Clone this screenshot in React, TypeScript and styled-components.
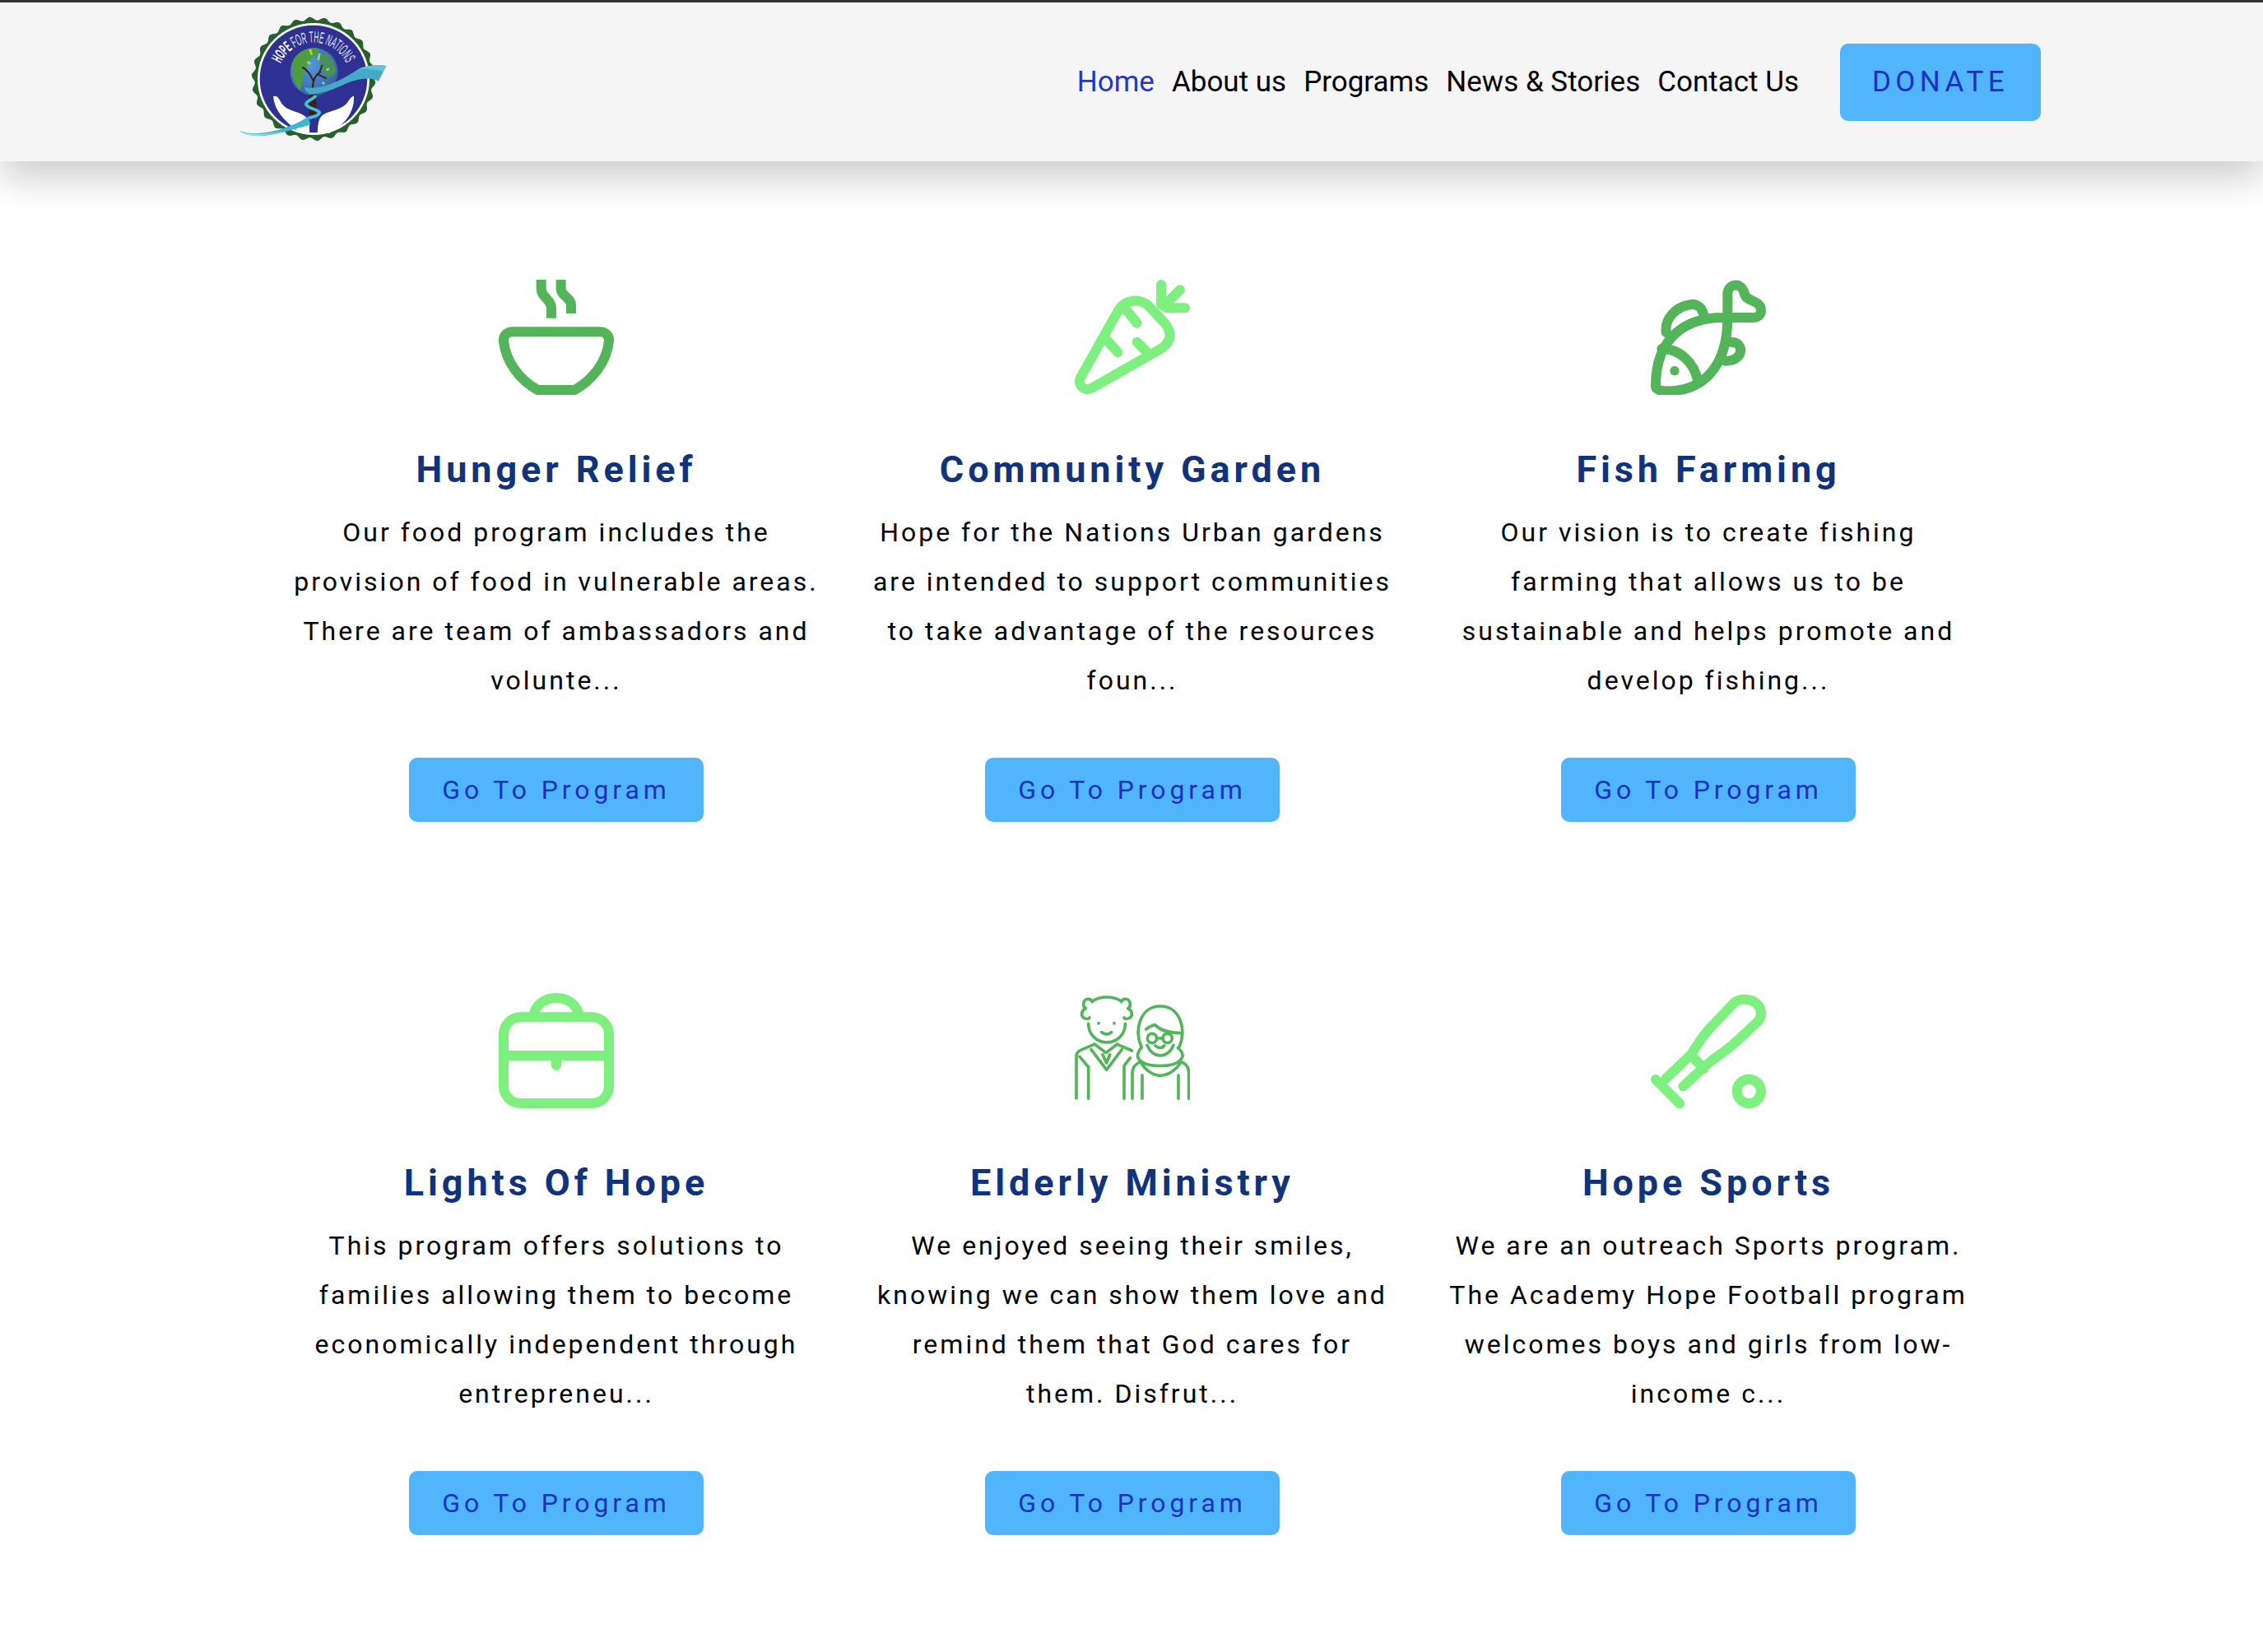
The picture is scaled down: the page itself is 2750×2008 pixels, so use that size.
import React from "react";
import styled, { createGlobalStyle } from "styled-components";

const GlobalStyle = createGlobalStyle`
  html, body {
    margin: 0;
    background: #fff;
    font-family: Roboto, "Liberation Sans", sans-serif;
  }
  * { box-sizing: border-box; }
`;

const Page = styled.div`
  width: 2750px;
  height: 2008px;
  overflow: hidden;
  border-top: 3px solid #333;
`;

const Header = styled.header`
  height: 193px;
  display: flex;
  align-items: center;
  justify-content: space-between;
  padding: 0 270px 0 260px;
  background: #f5f5f5;
  box-shadow: 0 20px 44px rgba(0, 0, 0, 0.2);
`;

const LogoMark = styled.svg`
  width: 260px;
  height: 200px;
`;

const Nav = styled.nav`
  display: flex;
  align-items: center;
`;

const NavLink = styled.a<{ $active?: boolean }>`
  margin-right: 21px;
  font-size: 35px;
  color: ${(p) => (p.$active ? "#2337c6" : "#000")};
  text-decoration: none;
`;

const DonateButton = styled.a`
  display: flex;
  align-items: center;
  justify-content: center;
  width: 244px;
  height: 94px;
  margin-left: 29px;
  border-radius: 10px;
  background: #50b5fb;
  color: #1a32c0;
  font-size: 35px;
  letter-spacing: 5.4px;
`;

const Grid = styled.main`
  display: grid;
  grid-template-columns: repeat(3, 700px);
  row-gap: 208px;
  justify-content: center;
  padding: 144px 0 0 2px;
`;

const Card = styled.article`
  display: flex;
  flex-direction: column;
  align-items: center;
  padding: 0 30px;
  text-align: center;
`;

const Icon = styled.svg<{ $tone: string }>`
  display: block;
  width: 140px;
  height: 140px;
  color: ${(p) => p.$tone};
  fill: none;
  stroke: currentColor;
  stroke-width: 36;
  stroke-linecap: round;
  stroke-linejoin: round;
`;

const Title = styled.h3`
  margin: 63px 0 0;
  font-size: 45px;
  line-height: 56px;
  font-weight: 700;
  letter-spacing: 4.9px;
  color: #11337b;
`;

const Blurb = styled.p`
  margin: 18px 0 0;
  font-size: 32px;
  line-height: 60px;
  letter-spacing: 3px;
  color: #000;
`;

const ProgramButton = styled.a`
  display: flex;
  align-items: center;
  justify-content: center;
  width: 358px;
  height: 78px;
  margin-top: 64px;
  border-radius: 10px;
  background: #50b5fb;
  color: #1a32c0;
  font-size: 32px;
  letter-spacing: 4.9px;
`;

const GREEN = "#54b45a";
const LIME = "#7df07f";

function Bowl() {
  return (
    <Icon $tone={GREEN} viewBox="78 60 420 420">
      <path strokeLinecap="butt" d="M233 60v32c0 32 37 40 37 72v36M305 60v32c0 28 37 32 37 60v31" />
      <path
        strokeLinecap="butt"
        d="M130 250h316c22 0 36 14 34 34-8 76-60 142-125 178H220C155 426 104 360 96 284c-2-20 12-34 34-34z"
      />
    </Icon>
  );
}

function Carrot() {
  return (
    <Icon $tone={LIME} viewBox="78 60 420 420">
      <path d="M100 415L238 170c22-36 72-46 110-14l58 62c28 34 24 66-8 90L140 455c-30 14-54-14-40-40z" />
      <path d="M393 78v72M462 97l-60 60M480 163h-66M262 165l43 53M195 280l40 45M305 287l42 42" />
    </Icon>
  );
}

function Fish() {
  return (
    <Icon $tone={GREEN} viewBox="78 60 420 420">
      <path d="M358 198V112c0-36 50-50 62 0 8 30 60 20 60 62 0 14-12 24-28 24H340c-120 0-244 60-244 250 0 14 22 20 56 18 110-6 206-80 206-268" />
      <path d="M118 312c66 0 118 50 132 118M134 252c-6-50 36-96 94-102 20-2 36 14 42 34M372 288c44-4 52 68-22 68" />
      <circle cx="165" cy="392" r="17" fill="currentColor" stroke="none" />
    </Icon>
  );
}

function Briefcase() {
  return (
    <Icon $tone={LIME} viewBox="78 50 420 420">
      <rect x="96" y="138" width="384" height="314" rx="62" />
      <path d="M96 278h384M288 278v36M204 136c8-44 42-68 84-68s76 24 84 68" />
    </Icon>
  );
}

function Elders() {
  return (
    <Icon $tone={GREEN} viewBox="78 60 420 420" style={{ strokeWidth: 11 }}>
      <path d="M128 172c0 40 30 68 67 68s67-28 67-68M142 90c30-20 76-20 106 0" />
      <path d="M142 92c-8-16-32-12-32 10 0 6 4 12 8 14-16 8-20 28-4 36 10 4 16 2 18-2M248 92c8-16 32-12 32 10 0 6-4 12-8 14 16 8 20 28 4 36-10 4-16 2-18-2" />
      <circle cx="165" cy="170" r="6" fill="currentColor" stroke="none" />
      <circle cx="222" cy="170" r="6" fill="currentColor" stroke="none" />
      <path d="M176 203c10 10 26 10 36 0" />
      <path d="M148 248l-48 20c-10 4-16 14-16 26v150M128 445V330l-32-38M240 250l46 20M280 297l-22 28v120" />
      <path d="M138 266l56 74 56-74M150 246l42 32 42-32M180 285l14 30 12-30" />
      <path d="M322 258c-30-60-6-150 68-150s98 90 68 150" />
      <path d="M338 192c12-8 22-14 32-16 18 18 50 30 92 30" />
      <circle cx="360" cy="225" r="17" />
      <circle cx="416" cy="225" r="17" />
      <path d="M377 225h22M372 252c10 10 24 10 32 0M342 250c10 24 28 38 48 38s38-14 48-38" />
      <path d="M322 258c-16 18-20 36-6 48 24 26 122 26 146 0 14-14 12-30-8-46" />
      <path d="M288 445v-92c0-20 12-36 30-42 18 34 50 50 72 50s56-16 76-50c18 6 28 22 28 42v92M324 360v85M456 360v85" />
    </Icon>
  );
}

function Bat() {
  return (
    <Icon $tone={LIME} viewBox="78 50 420 420">
      <path d="M133 362l92-88c30-46 52-82 90-118l65-68c30-30 100-13 100 37 0 15-8 27-20 37l-62 58c-44 42-74 56-110 86l-92 84" />
      <path d="M96 365l87 88M232 284l40 42" />
      <circle cx="436" cy="408" r="44" />
    </Icon>
  );
}

// outer seal edge: a circle with a shallow wave on its radius
function sealEdge(cx: number, cy: number, r: number, wave: number, count: number) {
  const points: string[] = [];
  for (let i = 0; i < 240; i++) {
    const a = (i / 240) * Math.PI * 2;
    const radius = r + Math.sin(a * count) * wave;
    points.push(`${(cx + Math.cos(a) * radius).toFixed(1)},${(cy + Math.sin(a) * radius).toFixed(1)}`);
  }
  return points.join(" ");
}

function Logo() {
  return (
    <LogoMark viewBox="0 0 780 600">
      <defs>
        <path id="logo-arc" d="M243 232A132 132 0 0 1 483 232" />
        <radialGradient id="logo-globe-fill" cx="0.4" cy="0.35" r="0.75">
          <stop offset="0" stopColor="#4f9be0" />
          <stop offset="0.7" stopColor="#3d6fb0" />
          <stop offset="1" stopColor="#35508f" />
        </radialGradient>
      </defs>
      <polygon points={sealEdge(363, 288, 220, 6, 26)} fill="#28602b" />
      <circle cx="363" cy="288" r="204" fill="#fff" />
      <circle cx="363" cy="288" r="196" fill="#2e3191" />
      <text
        fontFamily="'Liberation Sans Narrow', 'Liberation Sans', sans-serif"
        fontSize="58"
        fill="#dfe0f2"
      >
        <textPath href="#logo-arc" textLength="300" lengthAdjust="spacingAndGlyphs">
          <tspan fontWeight="700" fill="#fff">HOPE</tspan> FOR THE NATIONS
        </textPath>
      </text>
      <circle cx="365" cy="262" r="87" fill="url(#logo-globe-fill)" />
      <path d="M285 235c5-35 45-62 85-60 20 0 15 20-5 30-25 15-30 50-40 75-5 15-5 40-12 50-20-25-33-60-28-95z" fill="#4f9c3f" />
      <path d="M390 195c30-5 52 30 55 65-10 25-35 25-45 5-10-20-20-45-10-70z" fill="#4a8f5a" />
      <path d="M350 180l6 20M385 195l-5 25M340 225l12 8M410 255l10-4M395 300l8 6" stroke="#a8d65a" strokeWidth="8" />
      <path d="M360 320V420" stroke="#3a2016" strokeWidth="26" fill="none" />
      <path d="M360 320c0-30 10-45 30-60M362 295c-10-25-22-40-40-50M380 272l30 14M385 262l10-25" stroke="#3a2016" strokeWidth="6" fill="none" />
      <path d="M216 352c10-4 16 0 24 13 10 20 22 30 50 40 30 10 55 20 58 45v36c-28 0-58-16-86-46-27-25-42-55-46-88z" fill="#fff" />
      <path d="M510 350c-10 2-16 12-24 25-16 20-46 25-76 37-25 10-32 28-32 74h42c25-16 50-31 70-61 15-25 22-50 20-75z" fill="#fff" />
      <path d="M330 318c70 12 140-28 200-68 30-12 70-15 98-10l-28 56c-30-16-70-11-120 9-50 25-90 35-130 40-10-10-20-15-20-27z" fill="#45a9c9" />
      <path d="M530 250c30-12 70-15 98-10l-10 20c-30-8-60-6-88-10z" fill="#5ec3d6" />
      <path d="M372 348c-10 16-34 18-37 32 5 16 40 16 50 30-5 16-25 16-40 20" stroke="#45c0d5" strokeWidth="11" fill="none" />
      <path d="M92 476c58 24 148 4 218-31l35-20 7 30c-62 15-152 50-222 37-15-2-30-8-38-16z" fill="#3fb6cf" />
      <path d="M92 476c40 22 110 12 170 0-50 14-100 22-132 16-15-2-30-8-38-16z" fill="#8fe3ea" />
    </LogoMark>
  );
}

const PROGRAMS = [
  {
    name: "Hunger Relief",
    icon: <Bowl />,
    blurb: "Our food program includes the provision of food in vulnerable areas. There are team of ambassadors and volunte...",
  },
  {
    name: "Community Garden",
    icon: <Carrot />,
    blurb: "Hope for the Nations Urban gardens are intended to support communities to take advantage of the resources foun...",
  },
  {
    name: "Fish Farming",
    icon: <Fish />,
    blurb: "Our vision is to create fishing farming that allows us to be sustainable and helps promote and develop fishing...",
  },
  {
    name: "Lights Of Hope",
    icon: <Briefcase />,
    blurb: "This program offers solutions to families allowing them to become economically independent through entrepreneu...",
  },
  {
    name: "Elderly Ministry",
    icon: <Elders />,
    blurb: "We enjoyed seeing their smiles, knowing we can show them love and remind them that God cares for them. Disfrut...",
  },
  {
    name: "Hope Sports",
    icon: <Bat />,
    blurb: "We are an outreach Sports program. The Academy Hope Football program welcomes boys and girls from low-income c...",
  },
];

export default function App() {
  return (
    <Page>
      <GlobalStyle />
      <Header>
        <Logo />
        <Nav>
          <NavLink $active>Home</NavLink>
          <NavLink>About us</NavLink>
          <NavLink>Programs</NavLink>
          <NavLink>News &amp; Stories</NavLink>
          <NavLink>Contact Us</NavLink>
          <DonateButton>DONATE</DonateButton>
        </Nav>
      </Header>
      <Grid>
        {PROGRAMS.map((program) => (
          <Card key={program.name}>
            {program.icon}
            <Title>{program.name}</Title>
            <Blurb>{program.blurb}</Blurb>
            <ProgramButton>Go To Program</ProgramButton>
          </Card>
        ))}
      </Grid>
    </Page>
  );
}
